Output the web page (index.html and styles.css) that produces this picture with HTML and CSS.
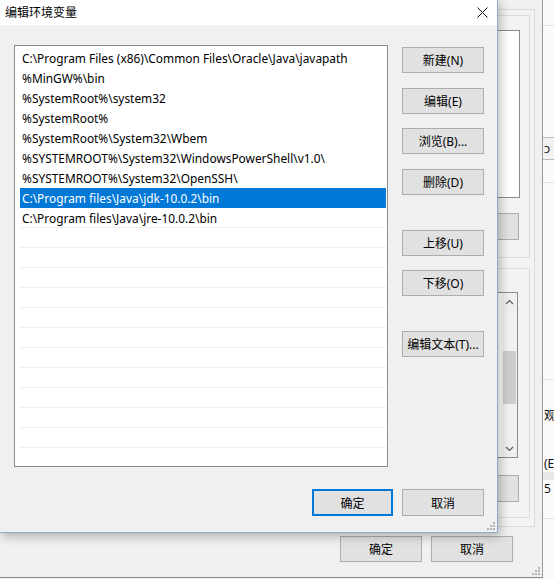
FILE: index.html
```html
<!DOCTYPE html>
<html lang="zh-CN">
<head>
<meta charset="utf-8">
<title>编辑环境变量</title>
<link rel="stylesheet" href="styles.css">
</head>
<body>
<div class="desk">
  <div class="win3">
    <div class="w3-line w3-l1"></div>
    <div class="w3-box">ɔ</div>
    <div class="w3-line w3-l2"></div>
    <div class="w3-line w3-l3"></div>
    <div class="w3-text w3-t1">观声</div>
    <div class="w3-text w3-t2">(E:</div>
    <div class="w3-band"></div>
    <div class="w3-text w3-t3">5 可</div>
    <div class="w3-line w3-l4"></div>
  </div>

  <div class="bgwin">
    <div class="bg-panel">
      <div class="grp g1">
        <div class="lb lb1"></div>
        <div class="bgbtn bgbtn1"></div>
      </div>
      <div class="grp g2">
        <div class="lb lb2">
          <div class="sb">
            <svg class="chev" width="9" height="6" viewBox="0 0 9 6"><path d="M1 5L4.5 1.5L8 5" fill="none" stroke="#606060" stroke-width="1.2"/></svg>
            <div class="sb-track"><div class="sb-thumb"></div></div>
            <svg class="chev" width="9" height="6" viewBox="0 0 9 6"><path d="M1 1L4.5 4.5L8 1" fill="none" stroke="#606060" stroke-width="1.2"/></svg>
          </div>
        </div>
        <div class="bgbtn bgbtn2"></div>
      </div>
    </div>
    <div class="bg-foot">
      <div class="btn">确定</div>
      <div class="btn">取消</div>
    </div>
    <svg class="grip grip-bg" width="10" height="10" viewBox="0 0 10 10"><g fill="#b4b4b4"><rect x="8" y="2" width="2" height="2"/><rect x="5" y="5" width="2" height="2"/><rect x="8" y="5" width="2" height="2"/><rect x="2" y="8" width="2" height="2"/><rect x="5" y="8" width="2" height="2"/><rect x="8" y="8" width="2" height="2"/></g></svg>
  </div>

  <div class="dlg">
    <div class="titlebar">
      <span class="title">编辑环境变量</span>
      <svg class="close" width="11" height="11" viewBox="0 0 11 11"><path d="M0.5 0.5L10.5 10.5M10.5 0.5L0.5 10.5" stroke="#111" stroke-width="1"/></svg>
    </div>
    <div class="dlg-body">
      <div class="list">
        <div class="row">C:\Program Files (x86)\Common Files\Oracle\Java\javapath</div>
        <div class="row">%MinGW%\bin</div>
        <div class="row">%SystemRoot%\system32</div>
        <div class="row">%SystemRoot%</div>
        <div class="row">%SystemRoot%\System32\Wbem</div>
        <div class="row">%SYSTEMROOT%\System32\WindowsPowerShell\v1.0\</div>
        <div class="row">%SYSTEMROOT%\System32\OpenSSH\</div>
        <div class="row sel">C:\Program files\Java\jdk-10.0.2\bin</div>
        <div class="row line">C:\Program files\Java\jre-10.0.2\bin</div>
        <div class="row line"></div>
        <div class="row line"></div>
        <div class="row line"></div>
        <div class="row line"></div>
        <div class="row line"></div>
        <div class="row line"></div>
        <div class="row line"></div>
        <div class="row line"></div>
        <div class="row line"></div>
        <div class="row line"></div>
        <div class="row line"></div>
      </div>
      <div class="side">
        <div class="btn b-new">新建(N)</div>
        <div class="btn b-s15">编辑(E)</div>
        <div class="btn b-s14">浏览(B)...</div>
        <div class="btn b-s15">删除(D)</div>
        <div class="btn b-s35">上移(U)</div>
        <div class="btn b-s14">下移(O)</div>
        <div class="btn b-s35">编辑文本(T)...</div>
      </div>
    </div>
    <div class="dlg-foot">
      <div class="btn ok">确定</div>
      <div class="btn cancel">取消</div>
    </div>
    <svg class="grip grip-dlg" width="10" height="10" viewBox="0 0 10 10"><g fill="#b4b4b4"><rect x="8" y="2" width="2" height="2"/><rect x="5" y="5" width="2" height="2"/><rect x="8" y="5" width="2" height="2"/><rect x="2" y="8" width="2" height="2"/><rect x="5" y="8" width="2" height="2"/><rect x="8" y="8" width="2" height="2"/></g></svg>
  </div>
</div>
</body>
</html>
```

FILE: styles.css
```css
* { box-sizing: border-box; }
html, body { margin: 0; padding: 0; }
body {
  width: 554px;
  height: 579px;
  overflow: hidden;
  background: #f0f0f0;
  font-family: "Noto Sans", "Noto Sans CJK SC", sans-serif;
  font-size: 12px;
  color: #000;
}
.desk { position: relative; width: 554px; height: 579px; overflow: hidden; }

/* far right window */
.win3 {
  position: absolute;
  left: 543px;
  top: 0;
  width: 40px;
  height: 579px;
  background: #f9f9f9;
  display: flex;
  flex-direction: column;
}
.w3-line { border-top: 1px solid #e3e3e3; height: 0; }
.w3-l1 { margin-top: 25px; }
.w3-box {
  margin-top: 111px;
  height: 23px;
  width: 14px;
  border: 1px solid #b9b9b9;
  border-left: none;
  background: #f2f2f2;
  font-size: 13px;
  line-height: 20px;
  color: #333;
  padding-left: 1px;
}
.w3-l2 { margin-top: 22px; }
.w3-l3 { margin-top: 196px; }
.w3-text { height: 14px; line-height: 14px; font-size: 12px; white-space: nowrap; color: #111; padding-left: 1px; }
.w3-t1 { margin-top: 29px; }
.w3-t2 { margin-top: 34px; }
.w3-band { height: 8px; background: #e8e8e8; margin-top: 1px; }
.w3-t3 { margin-top: 2px; }
.w3-l4 { margin-top: 22px; }

/* background window */
.bgwin {
  position: absolute;
  left: 0;
  top: 0;
  width: 543px;
  height: 578px;
  background: #f0f0f0;
  border-right: 1px solid #9a9a9a;
  border-bottom: 1px solid #8a8a8a;
  display: flex;
  flex-direction: column;
  align-items: flex-end;
}
.bg-panel {
  margin: 9px 7px 0 0;
  width: 420px;
  height: 518px;
  border: 1px solid #dcdcdc;
  background: #f3f3f3;
  display: flex;
  flex-direction: column;
  align-items: flex-end;
  padding-right: 4px;
}
.grp {
  width: 400px;
  border: 1px solid #dcdcdc;
  display: flex;
  flex-direction: column;
  align-items: flex-end;
  padding-right: 9px;
}
.g1 { margin-top: 5px; height: 243px; }
.g2 { margin-top: 10px; height: 250px; }
.lb { width: 300px; background: #fff; border: 1px solid #8c8c8c; }
.lb1 { margin-top: 14px; height: 168px; }
.lb2 { margin-top: 23px; height: 166px; margin-right: 2px; display: flex; justify-content: flex-end; }
.sb {
  width: 15px;
  background: #f0f0f0;
  display: flex;
  flex-direction: column;
  align-items: center;
  padding: 6px 0 5px;
}
.chev { display: block; flex: none; }
.sb-track { flex: 1; width: 100%; padding-top: 46px; }
.sb-thumb { width: 13px; margin-left: 1px; height: 53px; background: #cdcdcd; }
.bgbtn { width: 80px; height: 27px; background: #e1e1e1; border: 1px solid #adadad; margin-right: 1px; }
.bgbtn1 { margin-top: 15px; }
.bgbtn2 { margin-top: 17px; }
.bg-foot {
  margin-top: 9px;
  display: flex;
  gap: 9px;
  padding-right: 29px;
}
.bg-foot .btn { width: 82px; height: 26px; }

.grip { position: absolute; display: block; }
.grip-bg { right: 2px; bottom: 2px; }
.grip-dlg { right: 2px; bottom: 2px; }

/* dialog */
.dlg {
  position: absolute;
  left: 0;
  top: 0;
  width: 498px;
  height: 533px;
  background: #f0f0f0;
  border-right: 1px solid #86aed4;
  border-bottom: 1px solid #86aed4;
  box-shadow: 2px 3px 10px rgba(0, 0, 0, 0.28);
}
.titlebar {
  height: 25px;
  background: #fff;
  display: flex;
  align-items: center;
  padding: 0 9px 1px 5px;
}
.title { font-size: 12px; color: #000; }
.close { margin-left: auto; display: block; }
.dlg-body {
  display: grid;
  grid-template-columns: 374px 82px;
  column-gap: 14px;
  padding: 20px 13px 0 14px;
}
.list {
  height: 422px;
  background: #fff;
  border: 1px solid #8c8c8c;
  padding: 2px 1px 0 5px;
  overflow: hidden;
}
.row {
  height: 20px;
  line-height: 20px;
  padding-left: 2px;
  white-space: nowrap;
  overflow: hidden;
  font-size: 11.9px;
  color: #000;
}
.row.line { border-bottom: 1px solid #f0f0f0; }
.row.sel { background: #0078d7; color: #fff; }

.side { display: flex; flex-direction: column; }
.btn {
  height: 26px;
  background: #e1e1e1;
  border: 1px solid #adadad;
  display: flex;
  align-items: center;
  justify-content: center;
  font-size: 12px;
  color: #000;
  white-space: nowrap;
}
.b-new { margin-top: 2px; }
.b-s15 { margin-top: 15px; }
.b-s14 { margin-top: 14px; }
.b-s35 { margin-top: 35px; }

.dlg-foot {
  margin-top: 22px;
  display: flex;
  justify-content: flex-end;
  gap: 9px;
  padding-right: 13px;
}
.dlg-foot .btn { height: 27px; }
.ok { width: 81px; border-color: #0078d7; box-shadow: inset 0 0 0 1px #0078d7; }
.cancel { width: 82px; }
```
